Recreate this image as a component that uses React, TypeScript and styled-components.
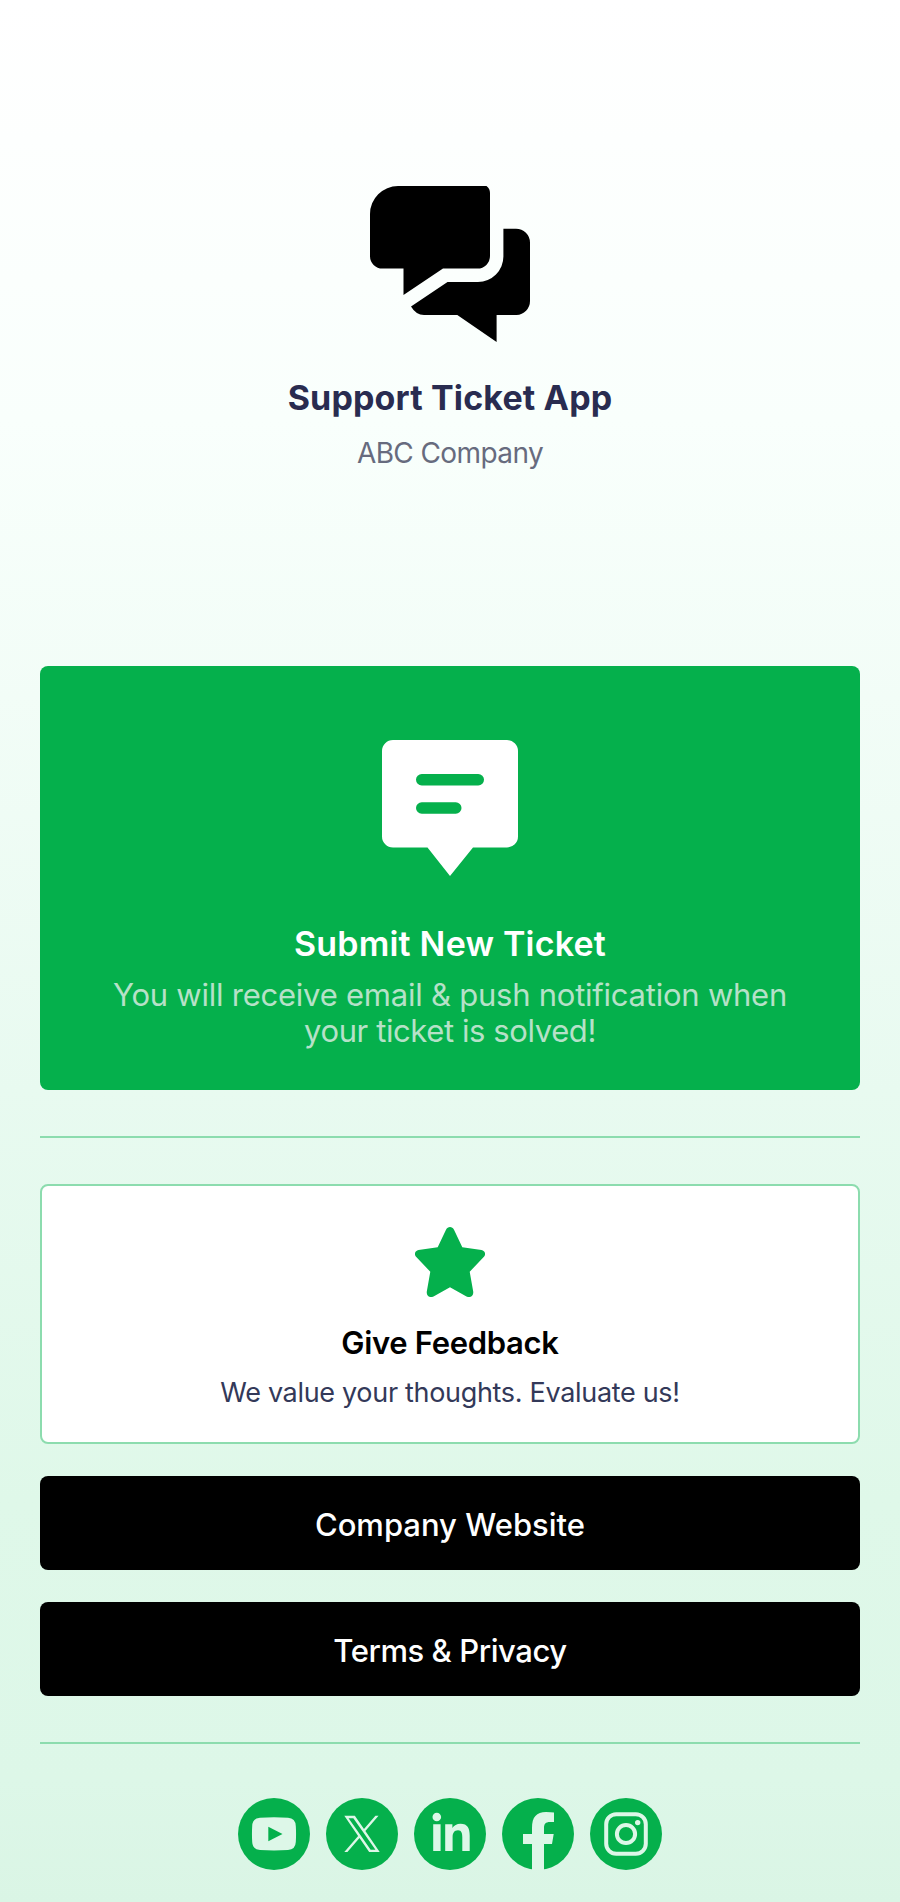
import React from "react";
import styled, { createGlobalStyle } from "styled-components";

const green = "#05b04c";
const mint = "#ddf7e8";

const GlobalStyle = createGlobalStyle`
  * { box-sizing: border-box; }
  body { margin: 0; font-family: Inter, "Liberation Sans", sans-serif; }
`;

const Page = styled.main`
  width: 900px;
  height: 1902px;
  padding: 0 40px;
  overflow: hidden;
  display: flex;
  flex-direction: column;
  background: linear-gradient(180deg, #ffffff 0, #f9fffc 420px, #e8faf0 1090px, #dff8e9 1500px, #ddf7e8 1780px, #daf5e5 1902px);
`;

const Header = styled.header`
  height: 666px;
  padding-top: 186px;
  display: flex;
  flex-direction: column;
  align-items: center;
`;

const Label = styled.p<{ $size: number; $line: number; $weight: number; $color: string; $spacing?: number; $top?: number }>`
  margin: ${(p) => p.$top ?? 0}px 0 0;
  font-size: ${(p) => p.$size}px;
  line-height: ${(p) => p.$line}px;
  font-weight: ${(p) => p.$weight};
  color: ${(p) => p.$color};
  letter-spacing: ${(p) => p.$spacing ?? 0}px;
  text-align: center;
  white-space: nowrap;
`;

const Line = styled.span<{ $spacing: number }>`
  display: block;
  letter-spacing: ${(p) => p.$spacing}px;
`;

const Card = styled.section<{ $filled?: boolean }>`
  height: ${(p) => (p.$filled ? 424 : 260)}px;
  padding-top: ${(p) => (p.$filled ? 74 : 41)}px;
  display: flex;
  flex-direction: column;
  align-items: center;
  border-radius: 8px;
  border: ${(p) => (p.$filled ? "none" : "2px solid #8cdcae")};
  background: ${(p) => (p.$filled ? green : "#ffffff")};
`;

const Divider = styled.hr`
  width: 100%;
  height: 2px;
  margin: 46px 0;
  border: 0;
  flex-shrink: 0;
  background: #8cdcae;
`;

const LinkButton = styled.button`
  height: 94px;
  margin-top: 32px;
  padding: 4px 0 0;
  border: 0;
  border-radius: 8px;
  background: #000000;
  font-family: inherit;
  flex-shrink: 0;
`;

const SocialRow = styled.nav`
  display: flex;
  justify-content: center;
  gap: 16px;
  margin-top: 8px;
`;

const ChatIcon = () => (
  <svg width="160" height="156" viewBox="0 0 160 156" fill="#000">
    <path d="M28 0H116.500Q120 2.500 120 7V70A12.500 12.500 0 0 1 107.500 82.600H73L33.500 109V82.600H12.500A12.500 12.500 0 0 1 0 70V28A28 28 0 0 1 28 0Z" />
    <path d="M133.400 42.700H146A14 14 0 0 1 160 56.700V115A14 14 0 0 1 146.500 129H126.600V156L87.300 129H54Q46 129 41 120.500L77.500 96H108A25.400 25.400 0 0 0 133.400 70.600Z" />
  </svg>
);

const TicketIcon = () => (
  <svg width="136" height="136" viewBox="0 0 136 136" fill="#fff">
    <path d="M11 0H125A11 11 0 0 1 136 11V96.500A11 11 0 0 1 125 107.500H91L68 136L45.500 107.500H11A11 11 0 0 1 0 96.500V11A11 11 0 0 1 11 0Z" />
    <rect x="34" y="34" width="68" height="11.500" rx="5.750" fill={green} />
    <rect x="34" y="62.200" width="45.500" height="11.500" rx="5.750" fill={green} />
  </svg>
);

const StarIcon = () => (
  <svg width="70" height="70" viewBox="0 0 70 70" fill={green}>
    <path d="M31 2.700C32.700 -.9 37.300 -.9 39 2.700L47.300 20.300L66.500 23C70 23.700 71.300 27.400 68.700 30L54.700 44.700L58.200 64.500C58.800 69 55 71.300 51.500 69.500L35 60.300L18.500 69.500C15 71.300 11.200 69 11.800 64.500L15.300 44.700L1.300 30C-1.300 27.400 0 23.700 3.500 23L22.700 20.300Z" />
  </svg>
);

const Social = ({ children }: { children: React.ReactNode }) => (
  <svg width="72" height="72" viewBox="0 0 72 72">
    <circle cx="36" cy="36" r="36" fill={green} />
    {children}
  </svg>
);

export default function App() {
  return (
    <>
      <GlobalStyle />
      <Page>
        <Header>
          <ChatIcon />
          <Label as="h1" $size={34} $line={44} $weight={700} $color="#292c50" $spacing={0.14} $top={34}>Support Ticket App</Label>
          <Label $size={28} $line={36} $weight={400} $color="#676b7e" $spacing={-0.6} $top={15}>ABC Company</Label>
        </Header>
        <Card $filled>
          <TicketIcon />
          <Label as="h2" $size={34} $line={44} $weight={600} $color="#fff" $spacing={0.21} $top={46}>Submit New Ticket</Label>
          <Label $size={31} $line={36} $weight={400} $color="#b6e1c8" $top={11}>
            <Line $spacing={-0.235}>You will receive email &amp; push notification when</Line>
            <Line $spacing={-0.4}>your ticket is solved!</Line>
          </Label>
        </Card>
        <Divider />
        <Card>
          <StarIcon />
          <Label as="h2" $size={31} $line={40} $weight={600} $color="#000" $spacing={-0.32} $top={26}>Give Feedback</Label>
          <Label $size={27} $line={36} $weight={400} $color="#333959" $spacing={-0.316} $top={12}>We value your thoughts. Evaluate us!</Label>
        </Card>
        <LinkButton><Label as="span" $size={31} $line={40} $weight={500} $color="#fff">Company Website</Label></LinkButton>
        <LinkButton><Label as="span" $size={31} $line={40} $weight={500} $color="#fff" $spacing={-0.43}>Terms &amp; Privacy</Label></LinkButton>
        <Divider />
        <SocialRow>
          <Social>
            <path fill={mint} d="M22 19.700Q36 18.800 50 19.700Q57.500 20.200 57.800 28Q58.300 36 57.800 44Q57.500 51.500 50 52Q36 52.900 22 52Q14.500 51.500 14.200 44Q13.700 36 14.200 28Q14.500 20.200 22 19.700Z" />
            <path fill={green} d="M30.300 28.700L44.500 36L30.300 43.200Z" />
          </Social>
          <Social>
            <path transform="translate(18.300 17.800) scale(.0295)" fill={mint} d="M714.163 519.284L1160.890 0H1055.030L667.137 450.887L357.328 0H0L468.492 681.821L0 1226.370H105.866L515.491 750.218L842.672 1226.370H1200L714.137 519.284H714.163ZM569.165 687.828L521.697 619.934L144.011 79.694H306.615L611.412 515.685L658.880 583.579L1055.080 1150.300H892.476L569.165 687.854V687.828Z" />
          </Social>
          <Social>
            <circle cx="22.800" cy="19" r="4.300" fill={mint} />
            <path fill={mint} d="M19.200 26.300H26.600V53H19.200ZM31.200 26.300H38.400V30C40 27.300 42.800 25.700 46.500 25.700C53.800 25.700 55.700 30.500 55.700 37.500V53H48.300V39.500C48.300 35.500 47.700 32.200 44 32.200C40.200 32.200 38.600 35 38.600 39V53H31.200Z" />
          </Social>
          <Social>
            <path fill={mint} d="M30 72.500V46H21V36H30V30C30 19 34.500 14 44 14Q49 14 52 14.600V24H48C43.500 24 42 26 42 30V36H51.700L50 46H42V72.500Z" />
          </Social>
          <Social>
            <g fill="none" stroke={mint} strokeWidth="4">
              <rect x="16.200" y="16.200" width="39.600" height="39.600" rx="10" />
              <circle cx="36" cy="36" r="9.100" />
            </g>
            <circle cx="47.700" cy="24.600" r="2.700" fill={mint} />
          </Social>
        </SocialRow>
      </Page>
    </>
  );
}
